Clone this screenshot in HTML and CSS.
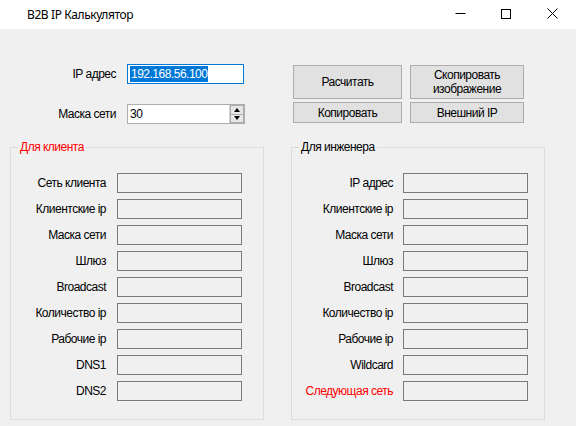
FILE: index.html
```html
<!DOCTYPE html>
<html lang="ru">
<head>
<meta charset="utf-8">
<title>B2B IP Калькулятор</title>
<link rel="stylesheet" href="styles.css">
</head>
<body>
<div class="window">
  <div class="titlebar">
    <span class="title">B2B IP Калькулятор</span>
    <div class="controls">
      <svg class="ctl" width="46" height="29" viewBox="0 0 46 29"><line x1="17.5" y1="13.5" x2="27.5" y2="13.5" stroke="#000" stroke-width="1"/></svg>
      <svg class="ctl" width="46" height="29" viewBox="0 0 46 29"><rect x="17.5" y="9.5" width="9" height="9" fill="none" stroke="#000" stroke-width="1"/></svg>
      <svg class="ctl" width="46" height="29" viewBox="0 0 46 29"><path d="M17.5 8.5 L27.5 18.5 M27.5 8.5 L17.5 18.5" stroke="#000" stroke-width="1" fill="none"/></svg>
    </div>
  </div>
  <div class="client">
    <div class="top">
      <div class="fields">
        <div class="frow">
          <span class="flabel">IP адрес</span>
          <div class="ipbox"><span class="sel">192.168.56.100</span></div>
        </div>
        <div class="frow">
          <span class="flabel">Маска сети</span>
          <div class="num">
            <span class="numval">30</span>
            <div class="spin">
              <div class="sbtn"><span class="tri-up"></span></div>
              <div class="sbtn"><span class="tri-down"></span></div>
            </div>
          </div>
        </div>
      </div>
      <div class="buttons">
        <div class="btn tall">Расчитать</div>
        <div class="btn tall">Скопировать<br>изображение</div>
        <div class="btn">Копировать</div>
        <div class="btn">Внешний IP</div>
      </div>
    </div>
    <div class="groups">
      <div class="group client-group">
        <span class="legend red">Для клиента</span>
        <div class="rows">
          <span class="lbl">Сеть клиента</span><div class="tb"></div>
          <span class="lbl">Клиентские ip</span><div class="tb"></div>
          <span class="lbl">Маска сети</span><div class="tb"></div>
          <span class="lbl">Шлюз</span><div class="tb"></div>
          <span class="lbl">Broadcast</span><div class="tb"></div>
          <span class="lbl">Количество ip</span><div class="tb"></div>
          <span class="lbl">Рабочие ip</span><div class="tb"></div>
          <span class="lbl">DNS1</span><div class="tb"></div>
          <span class="lbl">DNS2</span><div class="tb"></div>
        </div>
      </div>
      <div class="group eng-group">
        <span class="legend">Для инженера</span>
        <div class="rows">
          <span class="lbl">IP адрес</span><div class="tb"></div>
          <span class="lbl">Клиентские ip</span><div class="tb"></div>
          <span class="lbl">Маска сети</span><div class="tb"></div>
          <span class="lbl">Шлюз</span><div class="tb"></div>
          <span class="lbl">Broadcast</span><div class="tb"></div>
          <span class="lbl">Количество ip</span><div class="tb"></div>
          <span class="lbl">Рабочие ip</span><div class="tb"></div>
          <span class="lbl">Wildcard</span><div class="tb"></div>
          <span class="lbl red">Следующая сеть</span><div class="tb"></div>
        </div>
      </div>
    </div>
  </div>
</div>
</body>
</html>
```
FILE: styles.css
```css
* { box-sizing: border-box; }
html, body { margin: 0; padding: 0; }
body {
  width: 576px;
  height: 426px;
  overflow: hidden;
  font-family: "Liberation Sans", Arial, sans-serif;
  font-size: 12px;
  letter-spacing: -0.5px;
  color: #000;
  background: #f0f0f0;
}
.window { width: 576px; height: 426px; display: flex; flex-direction: column; }
.titlebar {
  height: 29px;
  background: #fff;
  display: flex;
  align-items: center;
  justify-content: space-between;
}
.title {
  padding-left: 27px;
  font-family: "Noto Sans", "Open Sans", sans-serif;
  font-size: 12px;
  letter-spacing: -0.4px;
  color: #000;
  line-height: 29px;
}
.controls { display: flex; height: 29px; margin-right: 0; }
.ctl { display: block; }
.client {
  flex: 1;
  background: #f0f0f0;
  padding-top: 35px;
}
.top { display: flex; align-items: flex-start; height: 83px; }
.fields { display: flex; flex-direction: column; gap: 20px; }
.frow { display: flex; align-items: center; gap: 11px; }
.flabel { width: 116px; text-align: right; }
.ipbox {
  width: 117px; height: 20px;
  background: #fff;
  border: 1px solid #0078d7;
  padding-left: 2px;
  display: flex; align-items: center;
}
.sel { background: #0078d7; color: #fff; line-height: 16px; padding: 0 1px; }
.num {
  width: 118px; height: 20px;
  background: #fff;
  border: 1px solid #adadad;
  display: flex; align-items: center; justify-content: space-between;
  padding-left: 2px;
}
.numval { line-height: 16px; }
.spin {
  width: 15px; height: 18px;
  display: flex; flex-direction: column;
  border-left: 1px solid #d0d0d0;
}
.sbtn {
  flex: 1;
  background: #e6e6e6;
  border: 1px solid #adadad;
  display: flex; align-items: center; justify-content: center;
}
.sbtn + .sbtn { border-top: none; }
.tri-up { width: 0; height: 0; border-left: 3.5px solid transparent; border-right: 3.5px solid transparent; border-bottom: 4px solid #000; }
.tri-down { width: 0; height: 0; border-left: 3.5px solid transparent; border-right: 3.5px solid transparent; border-top: 4px solid #000; }
.buttons {
  margin-left: 48px;
  margin-top: 1px;
  display: grid;
  grid-template-columns: 109px 114px;
  grid-template-rows: 34px 21px;
  column-gap: 8px;
  row-gap: 3px;
}
.btn {
  background: #e1e1e1;
  border: 1px solid #adadad;
  display: flex; align-items: center; justify-content: center;
  text-align: center;
  line-height: 14px;
}
.groups { display: flex; gap: 27px; padding-left: 10px; }
.group {
  position: relative;
  width: 254px; height: 273px;
  border: 1px solid #dcdcdc;
  padding-top: 25px;
}
.legend {
  position: absolute;
  top: -8px; left: 7px;
  padding: 0 2px;
  background: #f0f0f0;
  line-height: 14px;
}
.red { color: #ff0000; }
.rows {
  display: grid;
  grid-auto-rows: 20px;
  row-gap: 6px;
  align-items: center;
}
.client-group .rows { grid-template-columns: 95px 125px; column-gap: 11px; }
.eng-group .rows { grid-template-columns: 101px 125px; column-gap: 10px; }
.lbl { text-align: right; white-space: nowrap; }
.tb {
  height: 20px;
  border: 1px solid #7a7a7a;
  background: #f0f0f0;
}
```
